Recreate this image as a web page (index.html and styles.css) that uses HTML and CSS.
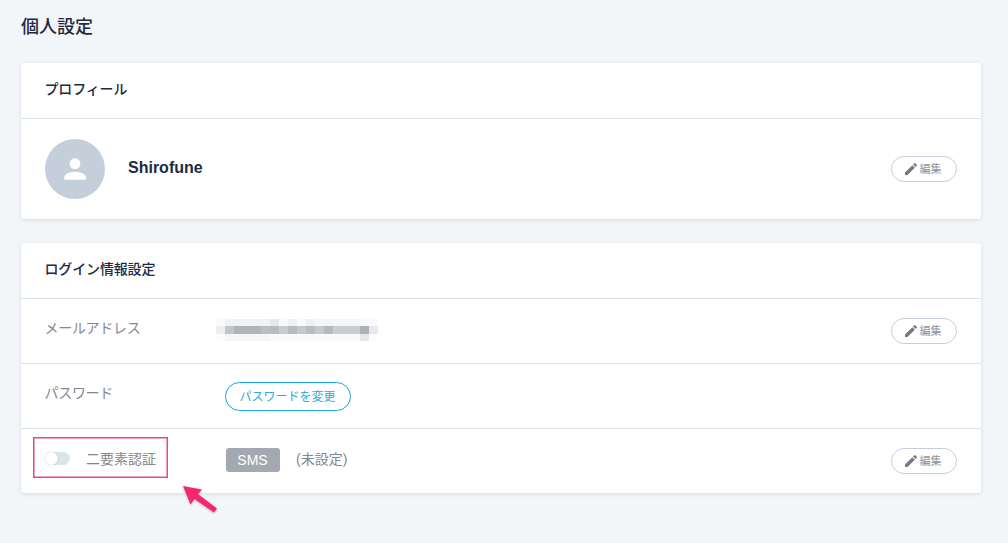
FILE: index.html
```html
<!DOCTYPE html>
<html lang="ja">
<head>
<meta charset="utf-8">
<title>個人設定</title>
<link rel="stylesheet" href="styles.css">
</head>
<body>
<main class="page">
  <h1 class="title">個人設定</h1>

  <section class="card">
    <h2 class="card-head">プロフィール</h2>
    <div class="profile">
      <div class="avatar">
        <svg width="32" height="32" viewBox="0 0 24 24"><path fill="#fff" d="M12 12c2.200 0 4-1.800 4-4s-1.800-4-4-4-4 1.800-4 4 1.800 4 4 4zm0 2c-2.700 0-8 1.300-8 4v2h16v-2c0-2.700-5.300-4-8-4z"/></svg>
      </div>
      <div class="name">Shirofune</div>
      <button class="edit">
        <svg width="16" height="16" viewBox="0 0 24 24"><path fill="#737a87" d="M3 17.250V21h3.750L17.810 9.940l-3.750-3.750L3 17.250zM20.710 7.040a1 1 0 0 0 0-1.410l-2.340-2.340a1 1 0 0 0-1.410 0l-1.830 1.830 3.750 3.750 1.830-1.830z"/></svg>
        <span class="edit-text">編集</span>
      </button>
    </div>
  </section>

  <section class="card">
    <h2 class="card-head">ログイン情報設定</h2>
    <div class="row">
      <div class="label">メールアドレス</div>
      <div class="value">
        <svg class="mosaic" width="162" height="22" viewBox="0 0 18 3" preserveAspectRatio="none" shape-rendering="crispEdges">
          <rect x="0" y="0" width="18" height="1" fill="#f8f9fa"/>
          <rect x="1" y="0" width="5" height="1" fill="#f1f2f4"/>
          <rect x="6" y="0" width="1" height="1" fill="#e6e7ea"/>
          <rect x="8" y="0" width="1" height="1" fill="#f0f1f3"/>
          <rect x="10" y="0" width="1" height="1" fill="#eeeff2"/>
          <rect x="11" y="0" width="5" height="1" fill="#f5f6f8"/>
          <rect x="0" y="2" width="18" height="1" fill="#fdfdfd"/>
          <rect x="1" y="2" width="5" height="1" fill="#f5f6f8"/>
          <rect x="6" y="2" width="10" height="1" fill="#fafafb"/>
          <rect x="16" y="2" width="1" height="1" fill="#e6e7ea"/>
          <rect x="0" y="1" width="1" height="1" fill="#eceef1"/>
          <rect x="1" y="1" width="1" height="1" fill="#c3c5cb"/>
          <rect x="2" y="1" width="3" height="1" fill="#b2b4bb"/>
          <rect x="5" y="1" width="1" height="1" fill="#bcbec4"/>
          <rect x="6" y="1" width="1" height="1" fill="#b9bbc1"/>
          <rect x="7" y="1" width="1" height="1" fill="#c8cad0"/>
          <rect x="8" y="1" width="1" height="1" fill="#b8bac1"/>
          <rect x="9" y="1" width="1" height="1" fill="#c6c8ce"/>
          <rect x="10" y="1" width="1" height="1" fill="#babcc3"/>
          <rect x="11" y="1" width="1" height="1" fill="#c6c9ce"/>
          <rect x="12" y="1" width="1" height="1" fill="#b6b9c1"/>
          <rect x="13" y="1" width="3" height="1" fill="#cbcdd2"/>
          <rect x="16" y="1" width="1" height="1" fill="#aeb0b9"/>
          <rect x="17" y="1" width="1" height="1" fill="#e8e9ec"/>
        </svg>
      </div>
      <button class="edit">
        <svg width="16" height="16" viewBox="0 0 24 24"><path fill="#737a87" d="M3 17.250V21h3.750L17.810 9.940l-3.750-3.750L3 17.250zM20.710 7.040a1 1 0 0 0 0-1.410l-2.340-2.340a1 1 0 0 0-1.410 0l-1.830 1.830 3.750 3.750 1.830-1.830z"/></svg>
        <span class="edit-text">編集</span>
      </button>
    </div>
    <div class="row">
      <div class="label">パスワード</div>
      <div class="value">
        <button class="change"><span class="change-text">パスワードを変更</span></button>
      </div>
    </div>
    <div class="row row-2fa">
      <div class="label label-2fa">
        <span class="toggle"><span class="knob"></span></span>
        <span>二要素認証</span>
      </div>
      <div class="value value-2fa">
        <span class="badge">SMS</span>
        <span class="status">(未設定)</span>
      </div>
      <button class="edit">
        <svg width="16" height="16" viewBox="0 0 24 24"><path fill="#737a87" d="M3 17.250V21h3.750L17.810 9.940l-3.750-3.750L3 17.250zM20.710 7.040a1 1 0 0 0 0-1.410l-2.340-2.340a1 1 0 0 0-1.410 0l-1.830 1.830 3.750 3.750 1.830-1.830z"/></svg>
        <span class="edit-text">編集</span>
      </button>
      <svg class="callout-box" width="135" height="41" viewBox="0 0 135 41">
        <rect x="0.750" y="0.750" width="133.500" height="39.500" fill="none" stroke="#f0447f" stroke-width="1.500"/>
      </svg>
      <svg class="arrow" width="40" height="34" viewBox="0 0 40 34">
        <path fill="#f5286e" d="M2 0 L21 3.500 L17 8 L36 22.500 L33 26.500 L13.500 13 L9.500 18.500 Z"/>
      </svg>
    </div>
  </section>
</main>
</body>
</html>
```

FILE: styles.css
```css
* { box-sizing: border-box; }

html, body {
  margin: 0;
  height: 100%;
}

body {
  background: #f3f6f9;
  color: #1e2a3e;
  font-family: "Liberation Sans", "Noto Sans CJK JP", sans-serif;
  overflow: hidden;
}

.page {
  padding: 15px 27px 0 21px;
}

.title {
  margin: 0 0 24px;
  font-size: 18px;
  line-height: 24px;
  font-weight: 500;
}

.card {
  background: #fff;
  border-radius: 3px;
  box-shadow: 0 1px 4px rgba(40, 60, 90, 0.14);
  margin-bottom: 24px;
}

.card-head {
  margin: 0;
  height: 56px;
  padding: 0 24px 6px 23.500px;
  display: flex;
  align-items: center;
  font-size: 14px;
  letter-spacing: -0.150px;
  font-weight: 500;
  border-bottom: 1px solid #d9e1ea;
}

.profile {
  height: 100px;
  display: flex;
  align-items: center;
  padding: 0 24px;
}

.avatar {
  width: 60px;
  height: 60px;
  border-radius: 50%;
  background: #c5cfdc;
  display: flex;
  align-items: center;
  justify-content: center;
}

.name {
  margin-left: 23px;
  flex: 1;
  font-size: 16px;
  font-weight: 700;
  position: relative;
  top: -1px;
}

.edit {
  width: 66px;
  height: 26px;
  padding: 0 4px 0 0;
  border: 1px solid #c5cfdc;
  border-radius: 13px;
  background: #fff;
  color: #8f939c;
  font-family: inherit;
  font-size: 11px;
  display: flex;
  align-items: center;
  justify-content: center;
  gap: 1px;
}

.edit-text {
  position: relative;
  top: -1px;
}

.row {
  height: 65px;
  display: flex;
  align-items: center;
  padding: 0 24px;
  border-bottom: 1px solid #d9e1ea;
  position: relative;
}

.row:last-child {
  height: 64px;
  border-bottom: 0;
}

.label {
  width: 180px;
  color: #83878f;
  font-size: 14px;
  letter-spacing: -0.300px;
  margin-left: -0.500px;
  position: relative;
  top: -4px;
}

.value {
  flex: 1;
  display: flex;
  align-items: center;
}

.mosaic {
  margin-left: -9px;
  margin-top: -2px;
  display: block;
}

.change {
  height: 29px;
  width: 126px;
  padding: 0;
  border: 1px solid #18a7d8;
  border-radius: 15px;
  background: #fff;
  color: #2eaad8;
  font-family: inherit;
  font-size: 12px;
}

.change-text {
  position: relative;
  top: -1px;
}

.label-2fa {
  display: flex;
  align-items: center;
  top: -3px;
  font-size: 14px;
  letter-spacing: 0;
}

.toggle {
  width: 25px;
  height: 13px;
  border-radius: 7px;
  background: #dde3eb;
  margin-right: 16px;
  margin-left: 0.500px;
  position: relative;
}

.knob {
  position: absolute;
  left: 0;
  top: 0;
  width: 13px;
  height: 13px;
  border-radius: 50%;
  background: #fff;
  box-shadow: 0 0 2px rgba(60, 80, 110, 0.3);
}

.value-2fa {
  padding-left: 1px;
  position: relative;
  top: -1px;
}

.badge {
  width: 54px;
  height: 24px;
  border-radius: 3px;
  background: #a4a8b0;
  color: #fff;
  font-size: 14px;
  display: flex;
  align-items: center;
  justify-content: center;
}

.status {
  margin-left: 16.500px;
  color: #83878f;
  font-size: 14px;
  position: relative;
  top: -2px;
}

.callout-box {
  position: absolute;
  left: 12px;
  top: 8px;
  pointer-events: none;
}

.arrow {
  position: absolute;
  left: 160px;
  top: 57px;
  filter: drop-shadow(0 1px 1px rgba(0, 0, 0, 0.25));
}
```
